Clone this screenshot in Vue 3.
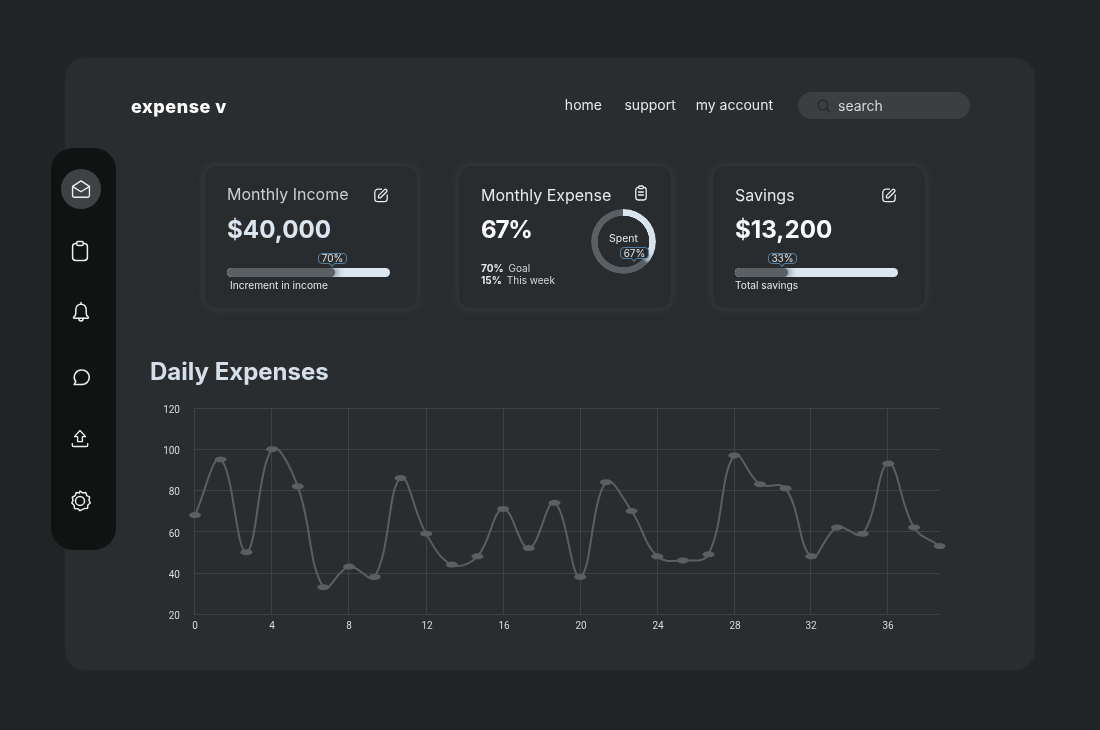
<template>
  <div class="page">
    <div class="panel">
      <aside class="sidebar">
        <div class="side-item active">
          <svg width="22" height="22" viewBox="0 0 24 24" class="ico"><path d="M2.8 9.2 12 3.2l9.2 6v9.6a2.2 2.2 0 0 1-2.2 2.2H5a2.2 2.2 0 0 1-2.2-2.2z"/><path d="M3 9.4 12 15l9-5.6"/></svg>
        </div>
        <div class="side-item nudge">
          <svg width="24" height="24" viewBox="0 0 24 24" class="ico"><path d="M8.6 4.6H7.2A3.2 3.2 0 0 0 4.6 7.8v10.4a3.2 3.2 0 0 0 3.2 3.2h8.4a3.2 3.2 0 0 0 3.2-3.2V7.8a3.2 3.2 0 0 0-2.6-3.2h-1.4"/><rect x="8.6" y="2.6" width="6.8" height="3.8" rx="1.4"/></svg>
        </div>
        <div class="side-item">
          <svg width="24" height="24" viewBox="0 0 24 24" class="ico"><path d="M12 2.6v1.6M12 4.2c-3.2 0-5.2 2.4-5.2 5.4v3.6c0 1.6-.8 2.8-2 3.8-.5.5-.2 1.2.4 1.2h13.6c.6 0 .9-.7.4-1.2-1.2-1-2-2.2-2-3.8V9.6c0-3-2-5.4-5.2-5.4z"/><path d="M9.8 18.2c0 1.6 1 2.8 2.2 2.8s2.2-1.2 2.2-2.8"/></svg>
        </div>
        <div class="side-item chat">
          <svg width="21" height="21" viewBox="0 0 24 24" class="ico thick"><path d="M12.6 3.4a8.3 8.3 0 0 1 0 16.6H3.6l1.8-3.4a8.3 8.3 0 0 1 7.2-13.2z"/></svg>
        </div>
        <div class="side-item nudge">
          <svg width="22" height="22" viewBox="0 0 24 24" class="ico"><path d="M12 2.8 18 9.4h-3.4v5.4H9.4V9.4H6z"/><path d="M3.6 17v1.8c0 .8.6 1.4 1.4 1.4h14c.8 0 1.4-.6 1.4-1.4V17"/></svg>
        </div>
        <div class="side-item nudge">
          <svg width="24" height="24" viewBox="0 0 24 24" class="ico"><path d="M12 1.8l2.6 2 3.2-.4 1 3.2 2.9 1.5-.8 3.2 1.3 2.7-2.3 2.2-.4 3.3-3.3.3L12 21.9l-2.2-2-3.3-.3-.4-3.3-2.3-2.2 1.3-2.7-.8-3.2L7.2 6.6l1-3.2 3.2.4z" transform="translate(0 .2) scale(1 .98)"/><circle cx="12" cy="11.9" r="4.5"/></svg>
        </div>
      </aside>

      <header class="topbar">
        <div class="logo">expense v</div>
        <nav class="nav">
          <a>home</a>
          <a>support</a>
          <a>my account</a>
        </nav>
        <div class="search">
          <svg width="16" height="16" viewBox="0 0 16 16" class="search-ico"><circle cx="7" cy="7" r="4.8"/><path d="m10.6 10.6 3.4 3.4"/></svg>
          <span>search</span>
        </div>
      </header>

      <section class="cards">
        <div class="card">
          <div class="card-head">
            <span class="title dim">Monthly Income</span>
            <svg width="16" height="16" viewBox="0 0 16 16" class="ico-sm"><path d="M8.5 2.2H5a3.2 3.2 0 0 0-3.2 3.2v6A3.2 3.2 0 0 0 5 14.6h6a3.2 3.2 0 0 0 3.2-3.2V8"/><path d="M5.5 10.8V8.6l6-6a1.2 1.2 0 0 1 1.7 0l.4.4a1.2 1.2 0 0 1 0 1.7l-6 6.1z"/></svg>
          </div>
          <div class="value blue">$40,000</div>
          <div class="bar">
            <div class="bar-track"><div class="bar-fill" :style="{ width: '108px' }"></div></div>
            <div class="tip tip-bar" :style="{ left: '91px' }">70%</div>
          </div>
          <div class="bar-label inset">Increment in income</div>
        </div>

        <div class="card">
          <div class="card-head">
            <span class="title">Monthly Expense</span>
            <svg width="16" height="16" viewBox="0 0 16 16" class="ico-sm clip"><rect x="2.8" y="2.4" width="10.4" height="12.6" rx="2.4"/><rect x="5.6" y="1" width="4.8" height="2.6" rx="1" fill="#292c2e"/><path d="M5.6 7h4.8M5.6 10h4.8"/></svg>
          </div>
          <div class="expense">
            <div>
              <div class="value tight">67%</div>
              <div class="stats">
                <div><b>70%</b><span>Goal</span></div>
                <div><b>15%</b><span>This week</span></div>
              </div>
            </div>
            <div class="donut">
              <div class="ring"></div>
              <div class="spent">Spent</div>
              <div class="tip tip-donut">67%</div>
            </div>
          </div>
        </div>

        <div class="card">
          <div class="card-head">
            <span class="title">Savings</span>
            <svg width="16" height="16" viewBox="0 0 16 16" class="ico-sm"><path d="M8.5 2.2H5a3.2 3.2 0 0 0-3.2 3.2v6A3.2 3.2 0 0 0 5 14.6h6a3.2 3.2 0 0 0 3.2-3.2V8"/><path d="M5.5 10.8V8.6l6-6a1.2 1.2 0 0 1 1.7 0l.4.4a1.2 1.2 0 0 1 0 1.7l-6 6.1z"/></svg>
          </div>
          <div class="value">$13,200</div>
          <div class="bar">
            <div class="bar-track"><div class="bar-fill" :style="{ width: '53px' }"></div></div>
            <div class="tip tip-bar" :style="{ left: '33px' }">33%</div>
          </div>
          <div class="bar-label">Total savings</div>
        </div>
      </section>

      <h2 class="chart-title">Daily Expenses</h2>

      <svg class="chart" width="810" height="240" viewBox="150 400 810 240">
        <g class="grid">
          <line v-for="t in yTicks" :key="'y' + t" x1="194.5" x2="939.5" :y1="gridY(t)" :y2="gridY(t)" />
          <line v-for="t in xTicks" :key="'x' + t.label" :x1="t.x" :x2="t.x" y1="408" y2="614.5" />
        </g>
        <text v-for="t in yTicks" :key="'yl' + t" x="180" :y="yPos(t) + 5" text-anchor="end">{{ t }}</text>
        <text v-for="t in xTicks" :key="'xl' + t.label" :x="t.x + 0.5" y="629" text-anchor="middle">{{ t.label }}</text>
        <path class="line" :d="linePath" />
        <ellipse v-for="(p, i) in points" :key="i" :cx="p.x" :cy="p.y" rx="6" ry="3" class="dot" />
      </svg>
    </div>
  </div>
</template>

<script setup>
import { computed } from 'vue'

const values = [68, 95, 50, 100, 82, 33, 43, 38, 86, 59, 44, 48, 71, 52, 74, 38, 84, 70, 48, 46, 49, 97, 83, 81, 48, 62, 59, 93, 62, 53]

const yTicks = [120, 100, 80, 60, 40, 20]
const xTicks = [
  { label: 0, x: 194.5 },
  { label: 4, x: 271.5 },
  { label: 8, x: 348.5 },
  { label: 12, x: 426.5 },
  { label: 16, x: 503.5 },
  { label: 20, x: 580.5 },
  { label: 24, x: 657.5 },
  { label: 28, x: 734.5 },
  { label: 32, x: 810.5 },
  { label: 36, x: 887.5 }
]

const yPos = (v) => 408 + (120 - v) * 2.06
const gridY = (v) => Math.floor(yPos(v) + 0.3) + 0.5

const points = computed(() =>
  values.map((v, i) => ({ x: 195 + i * 25.68, y: yPos(v) }))
)

// same curve as a chart.js line with tension 0.4
const linePath = computed(() => {
  const pts = points.value
  const t = 0.4
  const ctrl = pts.map((p, i) => {
    const a = pts[i - 1] || p
    const b = pts[i + 1] || p
    const d1 = Math.hypot(p.x - a.x, p.y - a.y)
    const d2 = Math.hypot(b.x - p.x, b.y - p.y)
    const sum = d1 + d2 || 1
    return {
      inX: p.x - (t * d1 / sum) * (b.x - a.x),
      inY: p.y - (t * d1 / sum) * (b.y - a.y),
      outX: p.x + (t * d2 / sum) * (b.x - a.x),
      outY: p.y + (t * d2 / sum) * (b.y - a.y)
    }
  })
  let d = `M${pts[0].x} ${pts[0].y}`
  for (let i = 1; i < pts.length; i++) {
    d += ` C${ctrl[i - 1].outX} ${ctrl[i - 1].outY} ${ctrl[i].inX} ${ctrl[i].inY} ${pts[i].x} ${pts[i].y}`
  }
  return d
})
</script>

<style>
body {
  background: #222527;
}
</style>

<style scoped>
.page {
  height: 730px;
  padding-top: 58px;
  box-sizing: border-box;
  overflow: hidden;
  background: #222527;
  font-family: Inter, "Liberation Sans", sans-serif;
  color: #e8eaec;
}
.panel {
  position: relative;
  width: 970px;
  height: 612px;
  margin-left: 65px;
  box-sizing: border-box;
  padding: 34px 65px 0 66px;
  background: #2a2d2f;
  border-radius: 20px;
  will-change: transform;
}
.sidebar {
  position: absolute;
  left: -14px;
  top: 90px;
  width: 65px;
  height: 402px;
  box-sizing: border-box;
  padding: 21px 0 0 10px;
  display: flex;
  flex-direction: column;
  align-items: flex-start;
  gap: 21.5px;
  background: #111313;
  border-radius: 22px;
}
.side-item {
  width: 40px;
  height: 40px;
  flex: none;
  box-sizing: border-box;
  display: flex;
  align-items: center;
  justify-content: center;
  border-radius: 50%;
}
.side-item.nudge {
  padding-right: 2px;
}
.side-item.active {
  background: #3f4245;
}
.side-item.chat {
  margin-top: 4px;
}
.ico {
  fill: none;
  stroke: #eceeef;
  stroke-width: 1.5;
  stroke-linejoin: round;
  stroke-linecap: round;
}
.ico.thick {
  stroke-width: 1.8;
}
.topbar {
  display: flex;
  align-items: center;
  height: 27px;
}
.logo {
  font-size: 18px;
  font-weight: 800;
  color: #fff;
  letter-spacing: 0.55px;
  margin-top: 1px;
}
.nav {
  display: flex;
  margin-left: auto;
  font-size: 14px;
  color: #e6e8ea;
  margin-top: -2px;
}
.nav a:nth-child(1) {
  margin-right: 22.5px;
}
.nav a:nth-child(2) {
  margin-right: 20px;
}
.search {
  display: flex;
  align-items: center;
  width: 172px;
  height: 27px;
  margin-left: 25px;
  padding-left: 18px;
  box-sizing: border-box;
  background: #3c3f42;
  border-radius: 14px;
  font-size: 14px;
  color: #d5d8db;
}
.search-ico {
  fill: none;
  stroke: #24272a;
  stroke-width: 1.2;
  margin-right: 6px;
}
.cards {
  display: flex;
  gap: 42px;
  margin-top: 47px;
  margin-left: 8px;
  padding-left: 66px;
  margin-right: -2px;
}
.card {
  width: 212px;
  height: 142px;
  flex: none;
  box-sizing: border-box;
  padding: 18px 22px 0;
  border-radius: 12px;
  background: #292c2e;
  box-shadow: 0 0 9px 1px rgba(72, 76, 80, 0.5);
}
.card-head {
  display: flex;
  align-items: center;
  justify-content: space-between;
  height: 22px;
}
.title {
  font-size: 16px;
  color: #e6e9ec;
}
.title.dim {
  color: #c9ced3;
  margin-bottom: 2px;
}
.ico-sm {
  fill: none;
  stroke: #eceeef;
  stroke-width: 1.3;
  stroke-linejoin: round;
  stroke-linecap: round;
  margin-right: 6px;
}
.ico-sm.clip {
  margin-right: 0;
  margin-top: -4px;
}
.value {
  margin-top: 9px;
  font-size: 24.2px;
  line-height: 30px;
  font-weight: 700;
  color: #fff;
}
.value.blue {
  color: #dbe6f0;
}
.value.tight {
  letter-spacing: -1.2px;
}
.bar {
  position: relative;
  margin-top: 23px;
  width: 163px;
  height: 9px;
}
.bar-track {
  height: 9px;
  border-radius: 5px;
  background: #dbe6f1;
  overflow: hidden;
}
.bar-fill {
  height: 9px;
  border-radius: 5px;
  background: #5a5f63;
  box-shadow: 3px 0 7px rgba(0, 0, 0, 0.45);
}
.bar-label {
  margin-top: 1px;
  font-size: 10.2px;
  line-height: 14px;
  color: #e4e5e6;
}
.bar-label.inset {
  padding-left: 3px;
}
.tip {
  position: absolute;
  width: 29px;
  height: 11px;
  box-sizing: border-box;
  border: 1px solid #56809f;
  border-radius: 4px;
  background: #292c2e;
  font-size: 10px;
  line-height: 9px;
  text-align: center;
  color: #dfe3e6;
}
.tip::after {
  content: "";
  position: absolute;
  left: 50%;
  bottom: -3px;
  width: 4px;
  height: 4px;
  margin-left: -2.5px;
  box-sizing: border-box;
  background: #292c2e;
  border-right: 1px solid #56809f;
  border-bottom: 1px solid #56809f;
  transform: rotate(45deg);
}
.tip-bar {
  top: -15px;
}
.tip-donut {
  left: 29px;
  top: 38px;
  height: 12px;
  line-height: 10px;
}
.expense {
  display: flex;
  justify-content: space-between;
  margin-right: -7px;
}
.stats {
  margin-top: 17px;
  font-size: 10px;
  line-height: 12px;
  color: #d4d7da;
}
.stats b {
  font-weight: 700;
  color: #e6e8ea;
  margin-right: 5px;
}
.donut {
  position: relative;
  width: 65px;
  height: 65px;
  margin-top: 3px;
}
.ring {
  width: 65px;
  height: 65px;
  border-radius: 50%;
  background: conic-gradient(#dbe6f1 0deg, #d6e1ec 112deg, #a9b3bc 128deg, #5a5f63 134deg, #5a5f63 360deg);
  -webkit-mask: radial-gradient(circle, transparent 25.5px, #000 26px);
  mask: radial-gradient(circle, transparent 25.5px, #000 26px);
}
.spent {
  position: absolute;
  left: 0;
  right: 0;
  top: 23px;
  text-align: center;
  font-size: 10.5px;
  line-height: 13px;
  color: #e4e5e6;
}
.chart-title {
  margin: 48px 0 0 19px;
  font-size: 24px;
  line-height: 32px;
  font-weight: 700;
  color: #d6e0ea;
}
.chart {
  display: block;
  margin: 12px 0 0 19px;
}
.chart text {
  font-family: Roboto, "Liberation Sans", sans-serif;
  font-size: 10px;
  fill: #d8dadc;
}
.grid line {
  stroke: #3e4245;
  stroke-width: 1;
}
.line {
  fill: none;
  stroke: #5a5f63;
  stroke-width: 2;
}
.dot {
  fill: #5a5f63;
}
</style>
